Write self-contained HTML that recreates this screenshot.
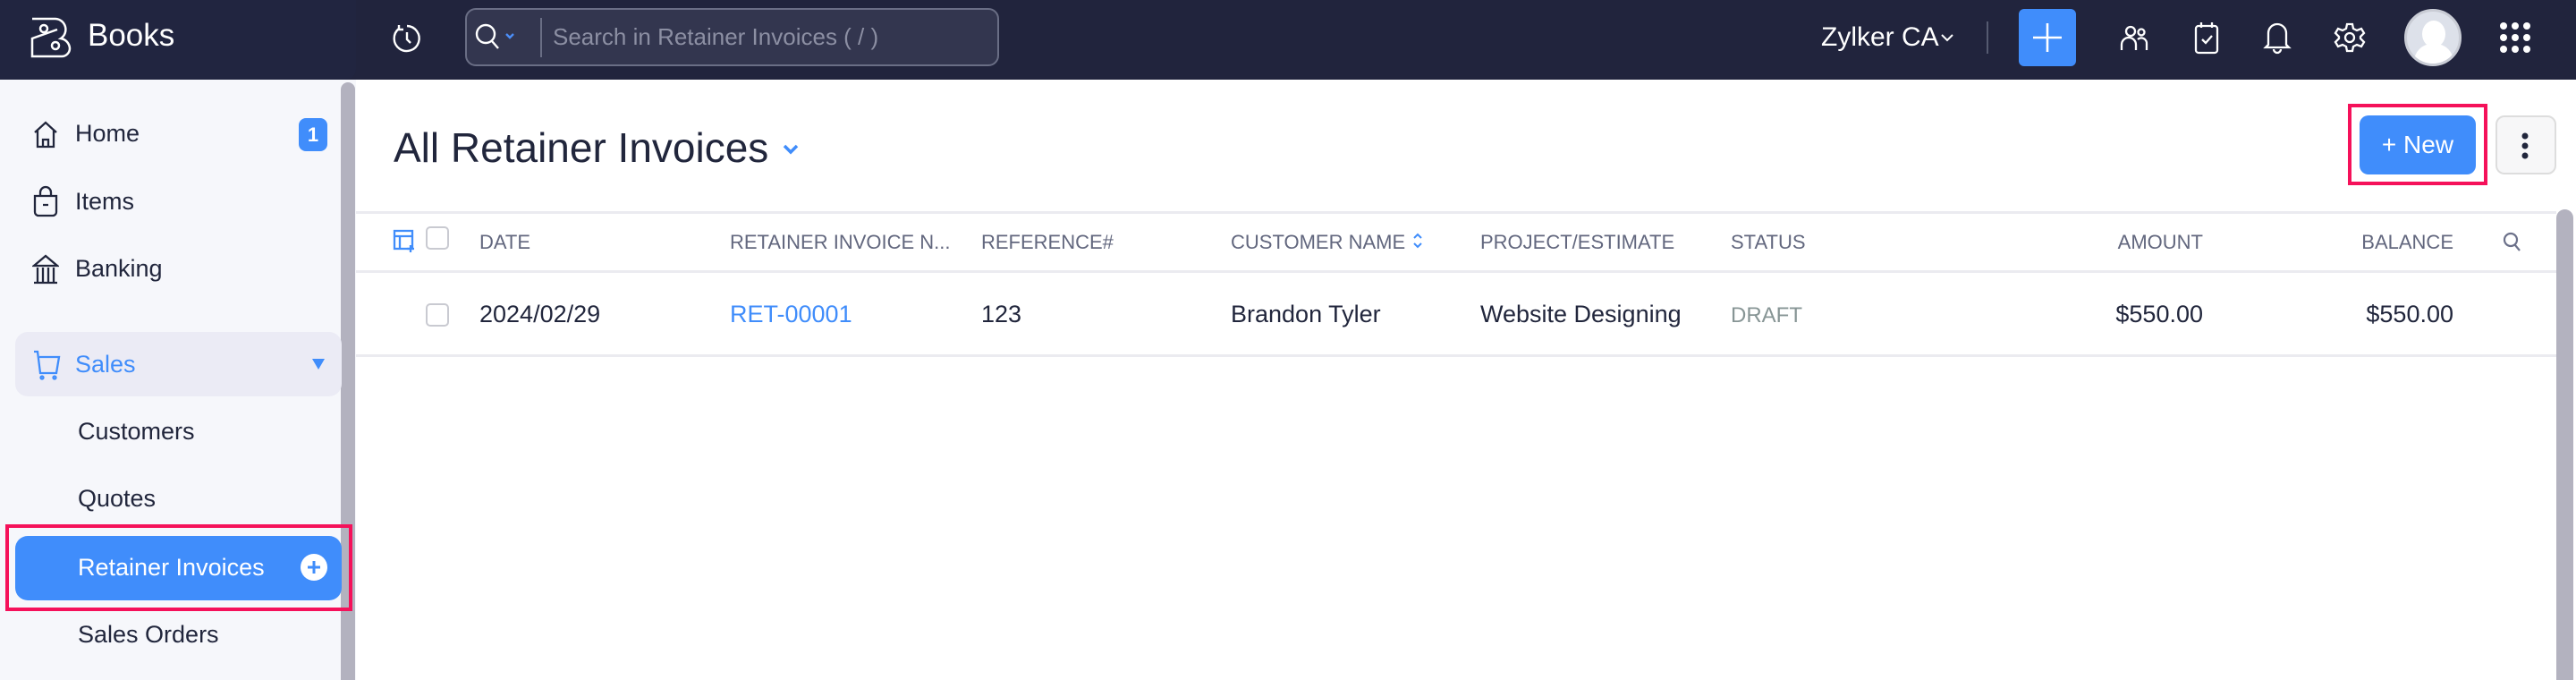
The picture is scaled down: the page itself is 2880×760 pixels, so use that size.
<!DOCTYPE html>
<html><head><meta charset="utf-8"><style>
*{box-sizing:border-box;margin:0;padding:0}
body{width:2880px;height:760px;overflow:hidden;background:#fff;font-family:"Liberation Sans",sans-serif;position:relative}
.a{position:absolute}
.top{left:0;top:0;width:2880px;height:89px;background:#21243d}
.logoarea{left:0;top:0;width:398px;height:89px;background:#212540;border-bottom-right-radius:12px}
.side{left:0;top:89px;width:398px;height:671px;background:#f6f7fb}
.sb{left:381px;top:92px;width:16px;height:668px;background:#b3b2bf;border-radius:8px 8px 0 0}
.nav{font-size:27px;color:#21263c}
.hdr{font-size:22px;color:#62677e;top:258px}
.row{font-size:27px;color:#21263c;top:336px}
.cb{width:26px;height:26px;border:2px solid #c9cad1;border-radius:5px;background:#fff}
svg{position:absolute}
</style></head><body>
<div class="a top"></div>
<div class="a logoarea"></div>
<svg style="left:34px;top:19px" width="46" height="46" viewBox="0 0 46 46" fill="none" stroke="#fff" stroke-width="2.5"><path d="M2 2h26a12 12 0 0 1 6 22a12 12 0 0 1 10 11v0a9 9 0 0 1-9 9H2V24l28-10"/><circle cx="15" cy="13" r="4"/><circle cx="28" cy="32" r="4"/></svg>
<div class="a" style="left:98px;top:20px;font-size:35px;color:#fff">Books</div>
<svg style="left:438px;top:26px" width="34" height="34" viewBox="0 0 34 34" fill="none" stroke="#fff" stroke-width="2.4"><path d="M8 6A14 14 0 1 0 17 3"/><path d="M17 10v8l4 4"/><path d="M8 2v5h5"/></svg>
<div class="a" style="left:520px;top:9px;width:597px;height:65px;border:2px solid #6a6e85;border-radius:12px;background:#33364f"></div>
<svg style="left:530px;top:24px" width="50" height="36" viewBox="0 0 50 36" fill="none" stroke="#fff" stroke-width="2.4"><circle cx="13" cy="14" r="10"/><path d="M20 22l7 8"/><path d="M36 14l4 4 4-4" stroke="#4c8ef7"/></svg>
<div class="a" style="left:604px;top:20px;width:2px;height:44px;background:#6a6e85"></div>
<div class="a" style="left:618px;top:26px;font-size:26px;color:#8c8fa3">Search in Retainer Invoices ( / )</div>
<div class="a" style="left:2036px;top:25px;font-size:30px;color:#fff">Zylker CA</div>
<svg style="left:2169px;top:36px" width="16" height="12" viewBox="0 0 16 12" fill="none" stroke="#fff" stroke-width="2"><path d="M2 3l6 6 6-6"/></svg>
<div class="a" style="left:2221px;top:24px;width:2px;height:36px;background:#555a70"></div>
<div class="a" style="left:2257px;top:10px;width:64px;height:64px;background:#408dfb;border-radius:6px"></div>
<svg style="left:2273px;top:26px" width="32" height="32" stroke="#fff" stroke-width="2.6"><path d="M16 0v32M0 16h32"/></svg>
<svg style="left:2370px;top:26px" width="34" height="34" viewBox="0 0 34 34" fill="none" stroke="#fff" stroke-width="2.3"><circle cx="12" cy="9" r="5"/><circle cx="24" cy="10" r="3.5"/><path d="M2 30v-6a8 8 0 0 1 16 0v6M20 18a6 6 0 0 1 10 5v7"/></svg>
<svg style="left:2452px;top:23px" width="30" height="38" viewBox="0 0 30 38" fill="none" stroke="#fff" stroke-width="2.3"><rect x="3" y="6" width="24" height="30" rx="3"/><path d="M9 2v6M21 2v6M10 21l4 4 7-8"/></svg>
<svg style="left:2530px;top:22px" width="32" height="40" viewBox="0 0 32 40" fill="none" stroke="#fff" stroke-width="2.3"><path d="M6 28V15a10 10 0 0 1 20 0v13l3 3H3z"/><path d="M12 33a4 4 0 0 0 8 0"/></svg>
<svg style="left:2609px;top:24px" width="36" height="36" viewBox="0 0 36 36" fill="none" stroke="#fff" stroke-width="2.3"><circle cx="18" cy="18" r="5"/><path d="M15 3h6l1 5 4 2 5-2 3 5-4 4v2l4 4-3 5-5-2-4 2-1 5h-6l-1-5-4-2-5 2-3-5 4-4v-2l-4-4 3-5 5 2 4-2z"/></svg>
<div class="a" style="left:2688px;top:10px;width:64px;height:64px;border-radius:50%;background:#dde1ea;border:3px solid #c9ccd5;overflow:hidden"><div class="a" style="left:17px;top:10px;width:26px;height:30px;border-radius:50%;background:#fff"></div><div class="a" style="left:8px;top:36px;width:44px;height:30px;border-radius:20px 20px 0 0;background:#fff"></div></div>
<svg style="left:2794px;top:24px" width="36" height="36" fill="#fff"><circle cx="5" cy="5" r="4"/><circle cx="18" cy="5" r="4"/><circle cx="31" cy="5" r="4"/><circle cx="5" cy="18" r="4"/><circle cx="18" cy="18" r="4"/><circle cx="31" cy="18" r="4"/><circle cx="5" cy="31" r="4"/><circle cx="18" cy="31" r="4"/><circle cx="31" cy="31" r="4"/></svg>

<div class="a side"></div>
<div class="a sb"></div>
<svg style="left:36px;top:134px" width="30" height="32" viewBox="0 0 30 32" fill="none" stroke="#21263c" stroke-width="2.3"><path d="M3 14L15 3l12 11M6 12v18h18V12M12 30v-8h6v8"/></svg>
<div class="a nav" style="left:84px;top:134px">Home</div>
<div class="a" style="left:334px;top:132px;width:32px;height:37px;background:#408dfb;border-radius:8px;color:#fff;font-size:22px;text-align:center;line-height:37px;font-weight:bold">1</div>
<svg style="left:36px;top:207px" width="30" height="36" viewBox="0 0 30 36" fill="none" stroke="#21263c" stroke-width="2.3"><path d="M9 12V8a6 6 0 0 1 12 0v4M3 12h24v18a4 4 0 0 1-4 4H7a4 4 0 0 1-4-4zM12 22h6"/></svg>
<div class="a nav" style="left:84px;top:210px">Items</div>
<svg style="left:36px;top:283px" width="30" height="36" viewBox="0 0 30 36" fill="none" stroke="#21263c" stroke-width="2.3"><path d="M2 14L15 3l13 11zM2 14h26M6 16v16M12 16v16M18 16v16M24 16v16M2 33h26"/></svg>
<div class="a nav" style="left:84px;top:285px">Banking</div>
<div class="a" style="left:17px;top:371px;width:365px;height:72px;background:#ebebf5;border-radius:14px"></div>
<svg style="left:36px;top:390px" width="32" height="36" viewBox="0 0 32 36" fill="none" stroke="#408dfb" stroke-width="2.3"><path d="M2 3h4l3 24h18l3-18H8"/><circle cx="11" cy="32" r="1.5"/><circle cx="25" cy="32" r="1.5"/></svg>
<div class="a nav" style="left:84px;top:392px;color:#408dfb">Sales</div>
<svg style="left:349px;top:400px" width="14" height="14"><path d="M0 1h14L7 13z" fill="#408dfb"/></svg>
<div class="a nav" style="left:87px;top:467px">Customers</div>
<div class="a nav" style="left:87px;top:542px">Quotes</div>
<div class="a" style="left:6px;top:586px;width:388px;height:97px;border:4px solid #f5115a"></div>
<div class="a" style="left:17px;top:599px;width:365px;height:72px;background:#408dfb;border-radius:14px"></div>
<div class="a nav" style="left:87px;top:619px;color:#fff">Retainer Invoices</div>
<div class="a" style="left:336px;top:619px;width:30px;height:30px;border-radius:50%;background:#fff"></div>
<svg style="left:341px;top:624px" width="20" height="20" stroke="#408dfb" stroke-width="3"><path d="M10 3v14M3 10h14"/></svg>
<div class="a nav" style="left:87px;top:694px">Sales Orders</div>

<div class="a" style="left:440px;top:138px;font-size:46px;color:#21263c">All Retainer Invoices</div>
<svg style="left:874px;top:160px" width="20" height="14" fill="none" stroke="#408dfb" stroke-width="3.5"><path d="M3 3l7 7 7-7"/></svg>
<div class="a" style="left:2625px;top:116px;width:156px;height:91px;border:4px solid #f5115a"></div>
<div class="a" style="left:2638px;top:129px;width:130px;height:66px;background:#408dfb;border-radius:10px;color:#fff;font-size:28px;line-height:66px;text-align:center">+ New</div>
<div class="a" style="left:2790px;top:129px;width:68px;height:66px;background:#f7f7f8;border:2px solid #ddd;border-radius:10px"></div>
<svg style="left:2818px;top:148px" width="10" height="30" fill="#21263c"><circle cx="5" cy="4" r="3.5"/><circle cx="5" cy="15" r="3.5"/><circle cx="5" cy="26" r="3.5"/></svg>

<div class="a" style="left:398px;top:236px;width:2460px;height:3px;background:#ebebf0"></div>
<div class="a" style="left:398px;top:302px;width:2460px;height:3px;background:#ebebf0"></div>
<div class="a" style="left:398px;top:396px;width:2460px;height:3px;background:#ebebf0"></div>
<div class="a" style="left:2858px;top:234px;width:19px;height:526px;background:#b3b2bf;border-radius:10px 10px 0 0"></div>
<svg style="left:439px;top:256px" width="26" height="26" fill="none" stroke="#408dfb" stroke-width="2.3"><rect x="2" y="2" width="20" height="20"/><path d="M2 8h20M8 8v14M20 18v8M16 22h8"/></svg>
<div class="a cb" style="left:476px;top:253px"></div>
<div class="a hdr" style="left:536px">DATE</div>
<div class="a hdr" style="left:816px">RETAINER INVOICE N...</div>
<div class="a hdr" style="left:1097px">REFERENCE#</div>
<div class="a hdr" style="left:1376px">CUSTOMER NAME</div>
<svg style="left:1579px;top:259px" width="12" height="20" fill="none" stroke="#408dfb" stroke-width="2"><path d="M2 7l4-4 4 4M2 13l4 4 4-4"/></svg>
<div class="a hdr" style="left:1655px">PROJECT/ESTIMATE</div>
<div class="a hdr" style="left:1935px">STATUS</div>
<div class="a hdr" style="left:2263px;width:200px;text-align:right">AMOUNT</div>
<div class="a hdr" style="left:2543px;width:200px;text-align:right">BALANCE</div>
<svg style="left:2797px;top:258px" width="24" height="26" fill="none" stroke="#6c718a" stroke-width="2.2"><circle cx="10" cy="10" r="7"/><path d="M15 16l5 6"/></svg>

<div class="a cb" style="left:476px;top:339px"></div>
<div class="a row" style="left:536px">2024/02/29</div>
<div class="a row" style="left:816px;color:#408dfb">RET-00001</div>
<div class="a row" style="left:1097px">123</div>
<div class="a row" style="left:1376px">Brandon Tyler</div>
<div class="a row" style="left:1655px">Website Designing</div>
<div class="a row" style="left:1935px;color:#879595;font-size:24px;top:339px">DRAFT</div>
<div class="a row" style="left:2263px;width:200px;text-align:right">$550.00</div>
<div class="a row" style="left:2543px;width:200px;text-align:right">$550.00</div>
</body></html>
